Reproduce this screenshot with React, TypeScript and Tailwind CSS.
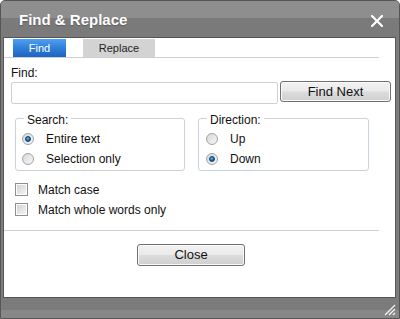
import React from "react";

const font = { fontFamily: '"Liberation Sans", Arial, sans-serif' };

function Radio({ checked }: { checked?: boolean }) {
  return (
    <div className="w-[12px] h-[12px] rounded-full border border-[#a3a3a3] bg-[linear-gradient(135deg,#d8d8d8,#f7f7f7)] flex items-center justify-center shrink-0">
      {checked && (
        <div className="w-[6px] h-[6px] rounded-full bg-[radial-gradient(circle_at_40%_35%,#5fb4ea,#0b5b9c_70%)] border border-[#0d3f6e]" />
      )}
    </div>
  );
}

function Checkbox() {
  return (
    <div className="w-[13px] h-[13px] border border-[#8f8f8f] bg-white p-[1px] shrink-0">
      <div className="w-full h-full bg-[linear-gradient(135deg,#d3d3d3,#f4f4f4)]" />
    </div>
  );
}

function Btn({ children, className }: { children: React.ReactNode; className: string }) {
  return (
    <div
      className={
        "border border-[#707070] rounded-[3px] bg-[linear-gradient(#f2f2f2_0%,#eaeaea_48%,#dcdcdc_52%,#cfcfcf_100%)] flex items-center justify-center text-[13px] text-[#111] shadow-[inset_0_0_0_1px_#fafafa] " +
        className
      }
    >
      {children}
    </div>
  );
}

export default function App() {
  return (
    <div
      style={font}
      className="w-[400px] h-[319px] border border-[#555] rounded-t-[5px] bg-[#7d7d7d] flex flex-col overflow-hidden"
    >
      {/* header */}
      <div className="h-[36px] shrink-0 bg-[linear-gradient(#8e8e8e_0px,#8e8e8e_17px,#7a7a7a_17px,#7a7a7a_100%)] flex items-start justify-between pt-[10px] pl-[18px] pr-[16px]">
        <span className="text-white font-bold text-[15px] leading-[18px] [text-shadow:0_1px_1px_rgba(0,0,0,0.25)]">
          Find &amp; Replace
        </span>
        <svg width="12" height="12" viewBox="0 0 12 12" className="mt-[4px]">
          <path d="M1 1 L11 11 M11 1 L1 11" stroke="#fff" strokeWidth="2.2" strokeLinecap="square" />
        </svg>
      </div>

      {/* body */}
      <div className="h-[261px] shrink-0 ml-[2px] mr-[3px] border border-[#555] bg-white flex flex-col text-[#111]">
        {/* tabs */}
        <div className="h-[20px] w-[375px] border-b border-[#cfcfcf] flex items-end pl-[9px] gap-[17px]">
          <div className="w-[53px] h-[18px] bg-[linear-gradient(#4ea0f0,#2f7fd8_50%,#1d63c2)] text-white text-[11px] flex items-center justify-center">
            Find
          </div>
          <div className="w-[72px] h-[18px] bg-[#d3d3d3] text-[#222] text-[11px] flex items-center justify-center">
            Replace
          </div>
        </div>

        <div className="mt-[8px] pl-[7px] text-[12px] leading-[14px]">Find:</div>

        <div className="mt-[1px] pl-[7px] flex items-start gap-[2px]">
          <div className="mt-[1px] w-[267px] h-[22px] border border-[#cdd1d6] rounded-[2px] bg-white" />
          <Btn className="w-[111px] h-[21px]">Find Next</Btn>
        </div>

        {/* fieldsets */}
        <div className="mt-[14px] pl-[11px] flex gap-[13px] text-[12px] leading-[14px]">
          <div className="relative w-[170px] h-[53px] border border-[#c8d3de] rounded-[3px]">
            <span className="absolute top-[-6px] left-[8px] px-[3px] bg-white">Search:</span>
            <div className="absolute left-[6px] top-[14px] flex flex-col gap-[8px]">
              <div className="flex items-center gap-[12px] h-[12px]">
                <Radio checked />
                <span>Entire text</span>
              </div>
              <div className="flex items-center gap-[12px] h-[12px]">
                <Radio />
                <span>Selection only</span>
              </div>
            </div>
          </div>
          <div className="relative w-[171px] h-[53px] border border-[#c8d3de] rounded-[3px]">
            <span className="absolute top-[-6px] left-[8px] px-[3px] bg-white">Direction:</span>
            <div className="absolute left-[7px] top-[14px] flex flex-col gap-[8px]">
              <div className="flex items-center gap-[12px] h-[12px]">
                <Radio />
                <span>Up</span>
              </div>
              <div className="flex items-center gap-[12px] h-[12px]">
                <Radio checked />
                <span>Down</span>
              </div>
            </div>
          </div>
        </div>

        {/* checkboxes */}
        <div className="mt-[12px] pl-[11px] flex flex-col gap-[7px] text-[12px] leading-[14px]">
          <div className="flex items-center gap-[10px] h-[13px]">
            <Checkbox />
            <span>Match case</span>
          </div>
          <div className="flex items-center gap-[10px] h-[13px]">
            <Checkbox />
            <span>Match whole words only</span>
          </div>
        </div>

        <div className="mt-[14px] w-[375px] h-px bg-[#cfcfcf]" />

        <div className="mt-[13px] pl-[133px]">
          <Btn className="w-[108px] h-[22px]">Close</Btn>
        </div>
      </div>

      {/* footer */}
      <div className="flex-1 flex flex-col relative">
        <div className="h-[12px] bg-[#7b7b7b]" />
        <div className="flex-1 bg-[#878787]" />
        <svg width="12" height="12" viewBox="0 0 12 12" className="absolute right-[3px] bottom-[2px]">
          <path d="M11 1 L1 11 M11 5 L5 11 M11 9 L9 11" stroke="#f4f4f4" strokeWidth="1.3" />
        </svg>
      </div>
    </div>
  );
}
